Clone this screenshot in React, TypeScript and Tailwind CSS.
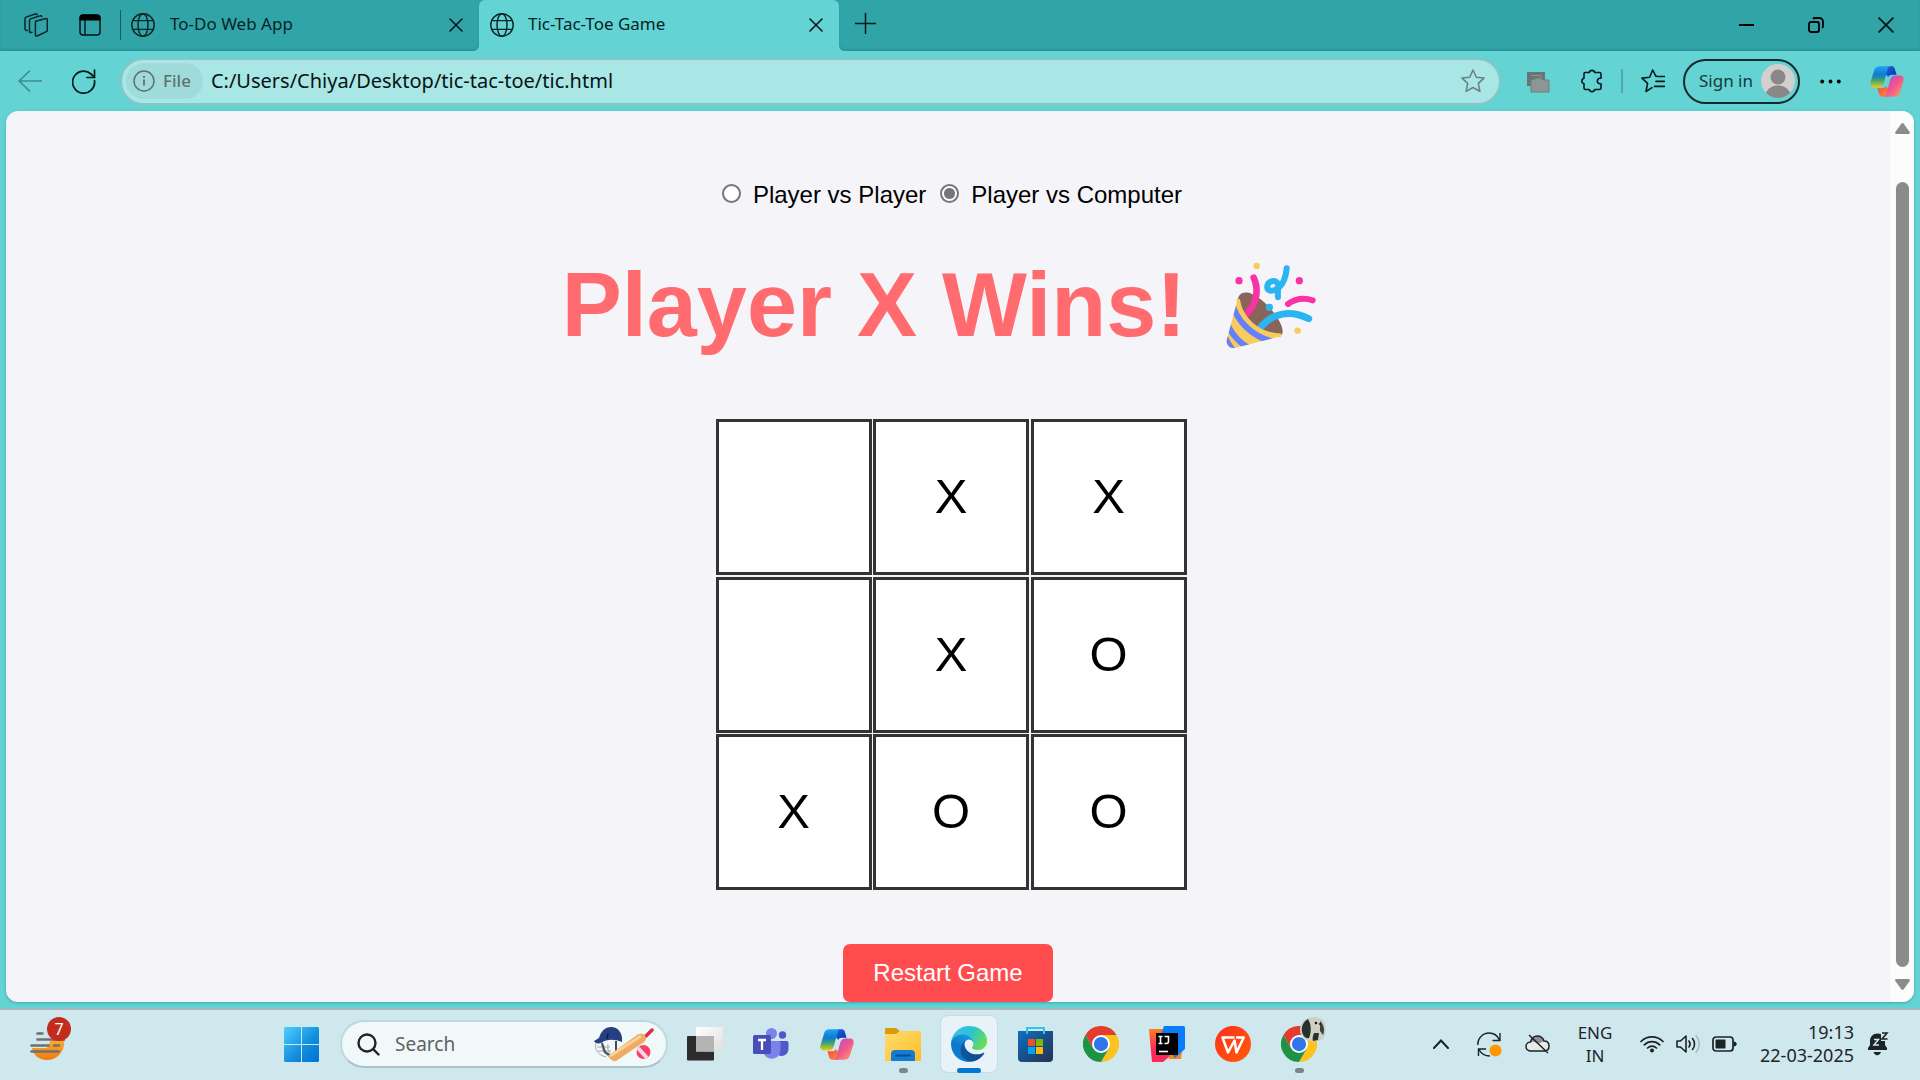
import { useId, useState, type ReactNode } from "react";

const ui = "font-['Noto_Sans',sans-serif]";

/* ---------- browser icons ---------- */

function Workspaces() {
  return (
    <svg width="24" height="24" viewBox="0 0 24 24" fill="none" stroke="#0c2526" strokeWidth="1.5" strokeLinejoin="round" strokeLinecap="round">
      <path d="M11.5 8.2 22 5.6c.8-.2 1.300.3 1.300 1v10.600c0 .7-.4 1.200-1 1.400l-9.200 4.400c-.9.300-1.700-.1-1.700-1V9.600c0-.7.4-1.200.9-1.400z" />
      <path d="M8 19.200l-1.200.300c-.8.100-1.300-.3-1.300-1V7.500c0-.8.300-1.300 1-1.600L16 2.800c.8-.3 1.500 0 1.700.8" />
      <path d="M3.300 17.600l-1-.2C1.500 17.200 1 16.800 1 16V5.700c0-.8.300-1.300 1-1.600L11.300 1c.9-.3 1.700 0 1.900.7" />
    </svg>
  );
}

function TabActions() {
  return (
    <svg width="22" height="22" viewBox="0 0 22 22">
      <rect x="1" y="1" width="20" height="20" rx="3" fill="none" stroke="#061516" strokeWidth="1.500" />
      <path d="M.5 6.500V4A3.500 3.500 0 0 1 4 .5h14A3.500 3.500 0 0 1 21.500 4v2.500z" fill="#000" />
      <path d="M6 6v15" stroke="#061516" strokeWidth="1.400" />
    </svg>
  );
}

function Globe() {
  return (
    <svg width="24" height="24" viewBox="0 0 24 24" fill="none" stroke="#0c2526" strokeWidth="1.400">
      <circle cx="12" cy="12" r="11.200" />
      <ellipse cx="12" cy="12" rx="5" ry="11.200" />
      <path d="M1.800 7.600h20.400M1.800 16.400h20.400" />
    </svg>
  );
}

function Cross({ size, weight = 1.6 }: { size: number; weight?: number }) {
  return (
    <svg width={size} height={size} viewBox="0 0 14 14" stroke="#081a1b" strokeWidth={weight} strokeLinecap="round">
      <path d="M1 1l12 12M13 1L1 13" />
    </svg>
  );
}

function Copilot() {
  const id = useId();
  return (
    <svg width="34" height="31" viewBox="0 0 101 92">
      <defs>
        <linearGradient id={id + "a"} x1="0" y1="0" x2="0" y2="1">
          <stop offset="0" stopColor="#1fa2f3" />
          <stop offset=".4" stopColor="#0f7bd0" />
          <stop offset=".65" stopColor="#3aa477" />
          <stop offset="1" stopColor="#f2cb10" />
        </linearGradient>
        <linearGradient id={id + "b"} x1="1" y1="1" x2="0" y2="0">
          <stop offset="0" stopColor="#a34df0" />
          <stop offset=".5" stopColor="#f0548c" />
          <stop offset="1" stopColor="#ffa45c" />
        </linearGradient>
        <linearGradient id={id + "c"} x1="0" y1="0" x2="1" y2="1">
          <stop offset="0" stopColor="#1b66d8" />
          <stop offset="1" stopColor="#0b2fae" />
        </linearGradient>
        <linearGradient id={id + "d"} x1="1" y1="1" x2="0" y2="0">
          <stop offset="0" stopColor="#f2433c" />
          <stop offset="1" stopColor="#ff8f3f" />
        </linearGradient>
      </defs>
      <path d="M50 1h15c7 0 9 7 11 15l3 10H66c-7 0-10 2-12 7L47 24z" fill={`url(#${id}c)`} />
      <path d="M50 1h15c7 0 9 7 11 15l3 10H66c-7 0-10 2-12 7L47 24z" fill={`url(#${id}d)`} transform="rotate(180 50.500 46)" />
      <path d="M30 1h30c-7 2-8 10-12 24l-7 26c-3 10-8 13-16 13H12C2 64-1 56 2 46l10-32C15 4 20 1 30 1z" fill={`url(#${id}a)`} />
      <path d="M30 1h30c-7 2-8 10-12 24l-7 26c-3 10-8 13-16 13H12C2 64-1 56 2 46l10-32C15 4 20 1 30 1z" fill={`url(#${id}b)`} transform="rotate(180 50.500 46)" />
    </svg>
  );
}

function TabStrip() {
  return (
    <div className={`flex h-[51px] text-[17px] text-[#062425] ${ui}`}>
      <div className="flex w-[479px] items-center rounded-br-md bg-[#31a4a8] pb-px pl-6 pr-4 shadow-[inset_0_-2px_2px_#2b969a]">
        <button aria-label="Workspaces"><Workspaces /></button>
        <button aria-label="Tab actions" className="ml-[31px]"><TabActions /></button>
        <span className="ml-[19px] h-[30px] w-px bg-[#155a5d]" />
        <button className="ml-2.5 flex flex-1 items-center gap-[15px] text-left">
          <Globe />
          <span className="pb-0.5">To-Do Web App</span>
        </button>
        <button aria-label="Close To-Do Web App"><Cross size={14} /></button>
      </div>
      <div className="flex w-[360px] bg-[#31a4a8]">
        <div className="flex flex-1 items-center rounded-t-md bg-[#63d3d3] pb-px pl-[11px] pr-4">
          <button className="flex flex-1 items-center gap-[14px] text-left">
            <Globe />
            <span className="pb-0.5">Tic-Tac-Toe Game</span>
          </button>
          <button aria-label="Close Tic-Tac-Toe Game"><Cross size={14} /></button>
        </div>
      </div>
      <div className="flex flex-1 items-center rounded-bl-md bg-[#31a4a8] pb-px pl-4 pr-[26px] shadow-[inset_0_-2px_2px_#2b969a]">
        <button aria-label="New tab" className="mb-1">
          <svg width="21" height="21" viewBox="0 0 21 21" stroke="#081a1b" strokeWidth="1.500"><path d="M10.500 0v21M0 10.500h21" /></svg>
        </button>
        <div className="ml-auto flex items-center gap-[54px]">
          <button aria-label="Minimize">
            <svg width="15" height="16" viewBox="0 0 15 16"><path d="M0 8h15" stroke="#000" strokeWidth="2" /></svg>
          </button>
          <button aria-label="Restore">
            <svg width="16" height="16" viewBox="0 0 16 16" fill="none" stroke="#000" strokeWidth="1.800">
              <rect x="1" y="5" width="10" height="10" rx="2" />
              <path d="M5 1.800C5.500 1.200 6.200 1 7 1h4.500A3.500 3.500 0 0 1 15 4.500V9c0 .8-.2 1.500-.8 2" />
            </svg>
          </button>
          <button aria-label="Close window"><Cross size={16} weight={1.7} /></button>
        </div>
      </div>
    </div>
  );
}

function Toolbar() {
  return (
    <div className={`flex h-[60px] items-center pl-[18px] pr-4 ${ui}`}>
      <button aria-label="Back">
        <svg width="24" height="22" viewBox="0 0 24 22" fill="none" stroke="#3f8c8d" strokeWidth="1.700" strokeLinecap="round" strokeLinejoin="round">
          <path d="M11.500 1L1 11l10.500 10M1 11h22.500" />
        </svg>
      </button>
      <button aria-label="Refresh" className="ml-[30px]">
        <svg width="24" height="25" viewBox="0 0 24 25" fill="none" stroke="#071c1d" strokeWidth="1.700" strokeLinecap="round" strokeLinejoin="round">
          <path d="M22.500 11.500A11 11 0 1 1 19 5l3.500 3.300" />
          <path d="M22.500 1v7.500H15" />
        </svg>
      </button>
      <div className="ml-6 flex h-[47px] flex-1 items-center rounded-full border-2 border-[#8cc4c4] bg-[#a8e7e5] pl-1 pr-[14px]">
        <button className="flex h-9 items-center gap-2 rounded-full bg-[#9fdbdb] pl-[7px] pr-3 text-[17px] font-medium text-[#64706f]">
          <svg width="22" height="22" viewBox="0 0 22 22" fill="none" stroke="#64706f" strokeWidth="1.500">
            <circle cx="11" cy="11" r="10" />
            <path d="M11 9.500v6M11 6v2" strokeWidth="1.800" />
          </svg>
          File
        </button>
        <input aria-label="Address" defaultValue="C:/Users/Chiya/Desktop/tic-tac-toe/tic.html" className="ml-2 min-w-0 flex-1 bg-transparent text-[20px] text-[#081314] outline-none" />
        <button aria-label="Add to favorites">
          <svg width="24" height="24" viewBox="0 0 24 24" fill="none" stroke="#68807f" strokeWidth="1.500" strokeLinejoin="round">
            <path d="M12 1l3.300 7.200 7.700.9-5.700 5.300 1.600 8-6.900-3.900-6.900 3.900 1.600-8L1 9.100l7.700-.9z" />
          </svg>
        </button>
      </div>
      <button aria-label="Collections" className="ml-[26px] mt-0.5">
        <svg width="23" height="21" viewBox="0 0 23 21">
          <rect width="18" height="14" fill="#6a7474" />
          <path d="M4 3.500h10V6" fill="none" stroke="#8d9696" />
          <path d="M4 7.500h4V6h6l1.500 2H22v12H4z" fill="#8d9696" stroke="#747e7e" />
        </svg>
      </button>
      <button aria-label="Extensions" className="ml-[30px]">
        <svg width="24" height="24" viewBox="0 0 24 24" fill="none" stroke="#071c1d" strokeWidth="1.600" strokeLinejoin="round">
          <path d="M5 3.500h4.200a2.900 2.900 0 0 1 5.600 0h4.700c.8 0 1.500.7 1.500 1.500v4.200h-1.500a2.900 2.900 0 0 0 0 5.600H21v4.200c0 .8-.7 1.500-1.500 1.500h-4.700a2.900 2.900 0 0 1-5.600 0H5.500A1.500 1.500 0 0 1 4 19v-4.200a2.900 2.900 0 0 1 0-5.600V5c0-.8.300-1.500 1-1.500z" />
        </svg>
      </button>
      <span className="ml-[17px] h-6 w-0.5 bg-[#53a8a8]" />
      <button aria-label="Favorites" className="ml-[18px]">
        <svg width="24" height="24" viewBox="0 0 24 24" fill="none" stroke="#071c1d" strokeWidth="1.600" strokeLinejoin="round" strokeLinecap="round">
          <path d="M17 7.500l-2.200-.4L11.700 1 8.600 8.200.9 9.100l5.700 5.300-1.600 8.100 6-3.900M15 12.400h8.500M13.500 17.400h10M18 7.500h5.500" />
        </svg>
      </button>
      <button className="ml-[18px] flex h-[45px] items-center gap-2 rounded-full border-2 border-[#17292a] pl-[14px] pr-[3px] text-[17px] text-[#17393a]">
        Sign in
        <svg width="34" height="34" viewBox="0 0 34 34">
          <circle cx="17" cy="17" r="17" fill="#d2d0ce" />
          <circle cx="17" cy="13" r="7.500" fill="#8a8886" />
          <path d="M5 29c2-5 6.500-7.500 12-7.500S27 24 29 29a17 17 0 0 1-24 0z" fill="#8a8886" />
        </svg>
      </button>
      <button aria-label="Settings and more" className="ml-5">
        <svg width="21" height="5" viewBox="0 0 21 5"><circle cx="2.200" cy="2.500" r="1.900" /><circle cx="10.500" cy="2.500" r="1.900" /><circle cx="18.800" cy="2.500" r="1.900" /></svg>
      </button>
      <button aria-label="Copilot" className="ml-[29px]"><Copilot /></button>
    </div>
  );
}

/* ---------- game page ---------- */

function PartyPopper() {
  const id = useId();
  return (
    <svg width="94" height="90" viewBox="80 60 280 270" role="img" aria-label="Party popper" fill="none" strokeLinecap="round">
      <clipPath id={id}>
        <path d="M121 175C135 235 185 282 252 284c-2 3-6 5-12 7L115 323c-18 4-31-7-28-22z" />
      </clipPath>
      <path d="M121 180c0-20 20-28 42-18 40 16 92 80 92 112 0 10-6 16-16 16C180 290 125 240 121 180z" fill="#886558" />
      <path d="M168 113c15 32 12 74-19 107" stroke="#f932a5" strokeWidth="20" />
      <path d="M187 264c38-48 92-54 146-28" stroke="#2bb4f2" strokeWidth="21" />
      <g clipPath={`url(#${id})`}>
        <rect x="80" y="160" width="180" height="170" fill="#f8cb5e" />
        <path d="M102 185c14 60 64 108 132 122" stroke="#6480ff" strokeWidth="18" strokeLinecap="butt" />
        <path d="M85 240c10 34 38 70 74 86" stroke="#6480ff" strokeWidth="18" strokeLinecap="butt" />
        <path d="M80 280c8 20 16 36 30 50" stroke="#6480ff" strokeWidth="12" strokeLinecap="butt" />
      </g>
      <path d="M121 178c9 60 60 106 130 108" stroke="#f8cb5e" strokeWidth="11" strokeLinecap="butt" />
      <path d="M267 85c-2 22-9 50-30 62-16 10-30 4-28-9 3-16 24-20 31-8 4 10-1 26 1 42" stroke="#2bb4f2" strokeWidth="18" strokeLinejoin="round" />
      <path d="M271 192c22-16 46-20 74-11" stroke="#f932a5" strokeWidth="18" />
      <circle cx="124" cy="122" r="11" fill="#f932a5" />
      <circle cx="305" cy="122" r="11" fill="#f932a5" />
      <circle cx="177" cy="78" r="9.500" fill="#f8cb5e" />
      <circle cx="300" cy="272" r="9.500" fill="#f8cb5e" />
      <circle cx="215" cy="202" r="11" fill="#2bb4f2" />
    </svg>
  );
}

const board = ["", "X", "X", "", "X", "O", "X", "O", "O"];

function Mode({ label, checked, onPick }: { label: string; checked: boolean; onPick: () => void }) {
  return (
    <label className="flex items-center gap-3">
      <input
        type="radio"
        name="mode"
        checked={checked}
        onChange={onPick}
        className="mb-1 size-[19px] appearance-none rounded-full border-2 border-[#767676] bg-white bg-clip-padding checked:bg-[radial-gradient(circle,#767676_0_5px,#fff_6px)]"
      />
      {label}
    </label>
  );
}

function Game() {
  const [mode, setMode] = useState("computer");
  return (
    <section className="flex flex-1 flex-col items-center overflow-hidden pt-[70px] font-['Liberation_Sans',Arial,sans-serif] text-2xl leading-7 text-black">
      <fieldset className="ml-2 flex gap-[14px]">
        <Mode label="Player vs Player" checked={mode === "player"} onPick={() => setMode("player")} />
        <Mode label="Player vs Computer" checked={mode === "computer"} onPick={() => setMode("computer")} />
      </fieldset>
      <h1 className="mt-11 flex items-center gap-[38px] pr-4 text-[90px] font-bold leading-[104px] text-[#ff6b6e]">
        Player X Wins!
        <PartyPopper />
      </h1>
      <div className="ml-1.5 mt-[62px] grid h-[471px] w-[471px] shrink-0 grid-cols-[repeat(3,156px)] grid-rows-[repeat(3,156px)] place-content-between">
        {board.map((mark, i) => (
          <button key={i} aria-label={`Cell ${i + 1}`} className="flex items-center justify-center border-3 border-[#333] bg-white pb-0.5 text-[49px]">
            {mark}
          </button>
        ))}
      </div>
      <button className="mt-[54px] h-[58px] shrink-0 rounded-[7px] bg-[#ff4d4f] px-[30px] text-2xl text-white">Restart Game</button>
    </section>
  );
}

function Scrollbar() {
  return (
    <div className="flex w-6 flex-col items-center bg-[#fcfcfc] py-3" aria-hidden="true">
      <svg width="15" height="11" viewBox="0 0 15 11"><path d="M6.300.8a1.500 1.500 0 0 1 2.400 0l5.800 8c.7 1 .2 2.200-1 2.200h-12c-1.200 0-1.700-1.200-1-2.200z" fill="#8b8b8b" /></svg>
      <span className="mb-3 mt-12 w-[13px] flex-1 rounded-full bg-[#8b8b8b]" />
      <svg width="15" height="11" viewBox="0 0 15 11"><path d="M6.300 10.200a1.500 1.500 0 0 0 2.400 0l5.800-8c.7-1 .2-2.200-1-2.200h-12C.3 0-.2 1.200.5 2.200z" fill="#8b8b8b" /></svg>
    </div>
  );
}

/* ---------- taskbar icons ---------- */

function Weather() {
  const id = useId();
  return (
    <svg width="35" height="34" viewBox="0 0 35 34">
      <defs>
        <linearGradient id={id} x1="0" y1="0" x2="0" y2="1"><stop offset="0" stopColor="#fbb22d" /><stop offset="1" stopColor="#f07a12" /></linearGradient>
      </defs>
      <path d="M34 11c2 12-6 22-17 22C9 33 3 28 2 21h14c3 0 3-8 7-9z" fill={`url(#${id})`} />
      <path d="M7.500 6.500h5M7.500 12.500h27M1.500 18.500h17M24 18.500h5M1.500 24.500h27" stroke="#6f6f6f" strokeWidth="2.600" strokeLinecap="round" />
    </svg>
  );
}

function Start() {
  const id = useId();
  return (
    <svg width="35" height="35" viewBox="0 0 35 35">
      <linearGradient id={id} x1="0" y1="0" x2="35" y2="35" gradientUnits="userSpaceOnUse"><stop offset="0" stopColor="#4dd0ff" /><stop offset=".55" stopColor="#1490df" /><stop offset="1" stopColor="#0070cf" /></linearGradient>
      <path d="M1 0h16v17H0V1zM18 0h16l1 1v16H18zM0 18h17v17H1l-1-1zM18 18h17v16l-1 1H18z" fill={`url(#${id})`} />
    </svg>
  );
}

function Cricket() {
  return (
    <svg width="60" height="36" viewBox="0 0 60 36">
      <g fill="none" stroke="#a4a9ac" strokeWidth="1">
        <path d="M2 17c-2 6 2 12 10 14M3 21h13M4 25h13M8 18c-1 5 2 10 8 13M14 18c-1 5 1 9 3 11" />
      </g>
      <path d="M8 17l3 9 6 4M22 15v10" fill="none" stroke="#454b54" strokeWidth="2" />
      <path d="M0 15l5-3C7 5 11 1 17 1c7 0 12 6 11 15-8-3-15-3-21 1-3 1-6 0-7-2z" fill="#263f83" />
      <path d="M14 7l-1 6" stroke="#0d1a42" strokeWidth="1.500" />
      <path d="M52 10l6-6" stroke="#d92c49" strokeWidth="3.500" strokeLinecap="round" />
      <path d="M14 30l29-21c3-2 6-1 8 0l1 4c-1 3-3 4-5 5L22 35c-2 1-6-1-8-5z" fill="#efaa63" />
      <path d="M16 30l31-20" stroke="#fbd19a" strokeWidth="3" />
      <circle cx="49.500" cy="26" r="7" fill="#f34466" />
      <path d="M44 22l9 10" stroke="#f6d6ee" strokeWidth="4" />
    </svg>
  );
}

function TaskView() {
  const id = useId();
  return (
    <svg width="36" height="34" viewBox="0 0 36 34">
      <linearGradient id={id} x1="0" y1="0" x2="1" y2="1"><stop offset="0" stopColor="#fff" /><stop offset="1" stopColor="#dedede" /></linearGradient>
      <rect y="9" width="27" height="24.500" rx="1" fill="#2c2c2c" />
      <rect x="9" width="27" height="24.500" rx="1" fill={`url(#${id})`} />
      <path d="M9 9h18v15.500H9z" fill="#b4b4b4" />
    </svg>
  );
}

function Teams() {
  return (
    <svg width="36" height="33" viewBox="0 0 36 33">
      <circle cx="29.500" cy="7" r="3.700" fill="#5059c9" />
      <path d="M25 13h9a1.500 1.500 0 0 1 1.500 1.500V21a7 7 0 0 1-10.500 6z" fill="#5059c9" />
      <circle cx="18.500" cy="5.500" r="5.500" fill="#7b83eb" />
      <path d="M10 13h16a1.500 1.500 0 0 1 1.500 1.500V23a8.800 8.800 0 0 1-17.500 0z" fill="#7b83eb" />
      <rect y="7" width="18" height="19" rx="1.500" fill="#474eb8" />
      <path d="M5 12h8M9 12v10" stroke="#fff" strokeWidth="2.300" />
    </svg>
  );
}

function Folder() {
  const id = useId();
  return (
    <svg width="36" height="33" viewBox="0 0 36 33">
      <linearGradient id={id} x1="0" y1="0" x2="1" y2="1"><stop offset="0" stopColor="#ffdd70" /><stop offset="1" stopColor="#fdbd26" /></linearGradient>
      <path d="M0 7V1.500C0 .6.600 0 1.500 0H11l4 3-3 4z" fill="#dd9a05" />
      <path d="M0 6h11l4-3h20c.6 0 1 .4 1 1v28c0 .6-.4 1-1 1H1c-.6 0-1-.4-1-1z" fill={`url(#${id})`} />
      <path d="M6 33v-7c0-2.500 1.500-4 4-4h16c2.500 0 4 1.500 4 4v7z" fill="#137bd2" />
      <path d="M11 27.500h14" stroke="#0b4f95" strokeWidth="2" strokeLinecap="round" />
    </svg>
  );
}

function Edge() {
  const id = useId();
  return (
    <svg width="36" height="36" viewBox="0 0 256 256">
      <linearGradient id={id + "a"} x1="0" y1="0" x2="1" y2="0"><stop offset="0" stopColor="#0c59a4" /><stop offset="1" stopColor="#114a8b" /></linearGradient>
      <linearGradient id={id + "b"} x1=".6" y1="0" x2=".3" y2="1"><stop offset="0" stopColor="#1b9de2" /><stop offset=".5" stopColor="#0f77c8" /><stop offset="1" stopColor="#0a7fdb" /></linearGradient>
      <linearGradient id={id + "c"} x1="0" y1=".2" x2="1" y2=".6"><stop offset="0" stopColor="#35c1f1" /><stop offset=".5" stopColor="#2bc3d2" /><stop offset="1" stopColor="#6be04f" /></linearGradient>
      <path fill={`url(#${id}a)`} d="M231.100 190.500c-3.400 1.800-6.900 3.400-10.500 4.700a101.800 101.800 0 0 1-35.900 6.500c-47.300 0-88.500-32.500-88.500-74.300a31.500 31.500 0 0 1 16.400-27.300C69.800 101.900 58.800 146.500 58.800 172.600c0 73.900 68.100 81.400 82.800 81.400 7.900 0 19.800-2.300 27-4.600l1.300-.4a128.300 128.300 0 0 0 66.600-52.800 4 4 0 0 0-5.400-5.700z" />
      <path fill={`url(#${id}b)`} d="M105.700 241.400a79.200 79.200 0 0 1-22.700-21.300 80.700 80.700 0 0 1 29.500-120c3.100-1.500 8.500-4.100 15.600-4a32.400 32.400 0 0 1 25.700 13 31.900 31.900 0 0 1 6.300 18.700c0-.2 24.500-79.600-80-79.600-43.900 0-80 41.700-80 78.200a130.200 130.200 0 0 0 12.100 56 128 128 0 0 0 156.400 67.100 75.600 75.600 0 0 1-62.800-8.100z" />
      <path fill={`url(#${id}c)`} d="M152.300 148.900c-.8 1-3.300 2.500-3.300 5.700 0 2.600 1.700 5.100 4.800 7.300 14.600 10.100 42 8.800 42.100 8.800a60.300 60.300 0 0 0 30.700-8.500 62.200 62.200 0 0 0 30.800-53.700c.3-22.700-8.100-37.800-11.400-44.400C224.600 22.400 178.300 0 128 0A128 128 0 0 0 0 126.200c.5-36.500 36.800-66 80-66 3.500 0 23.500.3 42 10.100 16.300 8.600 24.900 19 30.800 29.200 6.200 10.700 7.300 24.100 7.300 29.500s-2.700 13.300-7.800 19.900z" />
    </svg>
  );
}

function Store() {
  const id = useId();
  return (
    <svg width="35" height="35" viewBox="0 0 35 35">
      <linearGradient id={id} x1="0" y1="0" x2="1" y2="1"><stop offset="0" stopColor="#0d6fc4" /><stop offset="1" stopColor="#26304f" /></linearGradient>
      <path d="M0 4h35v27a4 4 0 0 1-4 4H4a4 4 0 0 1-4-4z" fill={`url(#${id})`} />
      <path d="M9 7V1h17v6" fill="none" stroke="#30c5f0" strokeWidth="2" />
      <path d="M10 12h7v7h-7z" fill="#f25022" /><path d="M18 12h7v7h-7z" fill="#7fba00" />
      <path d="M10 20h7v7h-7z" fill="#00a4ef" /><path d="M18 20h7v7h-7z" fill="#ffb900" />
    </svg>
  );
}

function Chrome() {
  return (
    <svg width="36" height="36" viewBox="0 0 48 48">
      <path d="M24 12h20.800A24 24 0 0 0 3.200 12l10.400 18z" fill="#e33b2e" />
      <path d="M34.400 30L24 48a24 24 0 0 0 20.800-36H24z" fill="#fcc31e" />
      <path d="M13.600 30L3.200 12A24 24 0 0 0 24 48l10.400-18z" fill="#1f9344" />
      <circle cx="24" cy="24" r="12" fill="#fff" />
      <circle cx="24" cy="24" r="9.500" fill="#2f76ea" />
    </svg>
  );
}

function IntelliJ() {
  const id = useId();
  return (
    <svg width="36" height="36" viewBox="0 0 36 36">
      <linearGradient id={id} x1="0" y1="0" x2="0" y2="1"><stop offset="0" stopColor="#fc801d" /><stop offset=".6" stopColor="#fe2857" /></linearGradient>
      <path d="M20 20l13 4-1 9H20z" fill="#fc801d" />
      <path d="M0 3h15v22l6 5-7 6H3L1 15z" fill={`url(#${id})`} />
      <path d="M15 0h19c1.500 0 2 .5 2 2v21L26 32 11 12z" fill="#087cfa" />
      <path d="M7 7h22v22H7z" />
      <path d="M9.500 10.500h4M11.500 10.500v7M9.500 17.500h4M15.500 10.500h4v5c0 1.500-1 2-2 2h-2" fill="none" stroke="#fff" strokeWidth="1.600" />
      <path d="M10 25.500h9" stroke="#fff" strokeWidth="1.600" />
    </svg>
  );
}

function Wps() {
  const id = useId();
  return (
    <svg width="36" height="36" viewBox="0 0 36 36">
      <linearGradient id={id} x1="0" y1="0" x2="1" y2="1"><stop offset="0" stopColor="#ff2e1a" /><stop offset="1" stopColor="#ff5d0c" /></linearGradient>
      <circle cx="18" cy="18" r="18" fill={`url(#${id})`} />
      <path d="M18.500 11.500H7.500L13 26.500l6.500-12 2 12 7.200-15H22" fill="none" stroke="#fff" strokeWidth="2.500" strokeLinejoin="round" strokeLinecap="round" />
    </svg>
  );
}

function DogAvatar() {
  return (
    <svg width="26" height="25" viewBox="0 0 26 25">
      <path d="M8 1c6-2 13-1 16 3 3 6 2 14-1 18-5 3-12 3-17 1-4-2-6-6-6-10C0 7 3 3 8 1z" fill="#cfcfc4" />
      <path d="M8 2c-5 3-7 8-6 13 1 4 4 7 7 6 2-4 3-13-1-19zM14 16c-1 3-2 5-1 8l5-1 1-7z" fill="#28302d" />
      <path d="M20 4c4 4 5 9 3 14l-3-4z" fill="#3b423f" />
      <circle cx="16" cy="6" r="1.300" fill="#151515" /><circle cx="20" cy="7" r="1" fill="#151515" />
    </svg>
  );
}

function TaskbarApp({ label, children, state }: { label: string; children: ReactNode; state?: "open" | "active" }) {
  return (
    <button
      aria-label={label}
      className={
        state === "active"
          ? "relative flex size-[58px] items-center justify-center rounded-lg border border-[#c6dde3] bg-[#e7f3f8]"
          : "relative flex size-[58px] items-center justify-center"
      }
    >
      {children}
      {state === "open" && <span className="absolute bottom-0 h-[5px] w-[9px] rounded-full bg-[#7b868a]" />}
      {state === "active" && <span className="absolute -bottom-px h-[5px] w-6 rounded-full bg-[#0078d4]" />}
    </button>
  );
}

function Tray() {
  return (
    <div className="ml-auto flex items-center text-[18px] leading-[23px] text-[#1c2528]">
      <button aria-label="Show hidden icons">
        <svg width="16" height="10" viewBox="0 0 16 10" fill="none" stroke="#1c2326" strokeWidth="2" strokeLinecap="round"><path d="M1 9l7-7.500L15 9" /></svg>
      </button>
      <button aria-label="Update available" className="ml-7">
        <svg width="25" height="25" viewBox="0 0 25 25" fill="none" stroke="#1c2326" strokeWidth="1.400">
          <path d="M.8 13C.5 6 6 1 12 1c4.500 0 8.500 2.500 10.500 7M23 1v7.500h-7.500M1.500 24v-7H9M2 17.500c2.300 4.500 6.500 6.500 11 6.500" />
          <circle cx="18.500" cy="18.500" r="6" fill="#ff9800" stroke="none" />
        </svg>
      </button>
      <button aria-label="OneDrive" className="ml-[23px]">
        <svg width="25" height="20" viewBox="0 0 25 20">
          <path d="M6 17c-3 0-5-2-5-4.500S3 8 5.500 8C6.500 4 9 2 12.500 2S18 4 19 7c3 0 5 2 5 5s-2 5-5 5z" fill="#e9e9e9" />
          <path d="M5 8.500C7 3.500 9.500 2 12.500 2 16 2 18 4 19 7l-6 3c-2-2-5-3-8-1.500z" fill="#8f8f8f" />
          <path d="M6 17c-3 0-5-2-5-4.500S3 8 5.500 8C6.500 4 9 2 12.500 2S18 4 19 7c3 0 5 2 5 5s-2 5-5 5zM4 1l19 18" fill="none" stroke="#1c2326" strokeWidth="1.500" />
        </svg>
      </button>
      <button className="ml-[27px] w-[36px] text-center text-[17px]">ENG<br />IN</button>
      <button aria-label="Network, volume and battery" className="ml-[27px] flex items-center gap-3">
        <svg width="24" height="18" viewBox="0 0 24 18" fill="none" stroke="#1c2326" strokeWidth="1.700" strokeLinecap="round">
          <path d="M1 6.500a15.500 15.500 0 0 1 22 0M4.300 9.800a11 11 0 0 1 15.400 0M7.600 13a6.200 6.200 0 0 1 8.800 0" />
          <circle cx="12" cy="15.500" r="2" fill="#1c2326" stroke="none" />
        </svg>
        <svg width="24" height="20" viewBox="0 0 24 20" fill="none" stroke="#1c2326" strokeWidth="1.600" strokeLinejoin="round" strokeLinecap="round">
          <path d="M1 7v6h3.500L10 18V2L4.500 7zM13 7c1.300 1.800 1.300 4.200 0 6M16.500 4.500c2.700 3.200 2.700 7.800 0 11" />
          <path d="M20 1.500c4.300 5 4.300 12 0 17" stroke="#a9bcc2" />
        </svg>
        <svg width="25" height="16" viewBox="0 0 25 16">
          <rect x="1" y="1" width="20" height="14" rx="3" fill="none" stroke="#1c2326" strokeWidth="1.700" />
          <rect x="3.500" y="3.500" width="10" height="9" rx="1" fill="#1c2326" />
          <path d="M22 6c3 0 3 4 0 4z" fill="#1c2326" stroke="#1c2326" />
        </svg>
      </button>
      <button className="ml-[23px] text-right">19:13<br />22-03-2025</button>
      <button aria-label="Notifications" className="ml-[13px]">
        <svg width="22" height="24" viewBox="0 0 22 24">
          <path d="M1 16l2-3V9c0-4 3-7.500 7.500-7.500S18 5 18 9v4l2 3v2H1z" fill="#1c2326" />
          <path d="M6.500 20h7.500c-.5 2-2 3.200-3.800 3.200S7 22 6.500 20z" fill="#1c2326" />
          <path d="M7 7.500h4.500L7 13h5" fill="none" stroke="#d0e8ee" strokeWidth="1.500" />
          <path d="M14 0h8v9h-8z" fill="#d0e8ee" />
          <path d="M15 1h5l-5 6h5.500" fill="none" stroke="#1c2326" strokeWidth="1.600" />
        </svg>
      </button>
    </div>
  );
}

function Taskbar() {
  return (
    <footer className={`flex h-[72px] items-center border-t-2 border-[#a5b9c1] bg-[#cfe8ee] pb-0.5 pl-[30px] pr-[31px] ${ui}`}>
      <button aria-label="Weather, 7 notifications" className="relative">
        <Weather />
        <span className="absolute -right-1.5 -top-2.5 flex size-6 items-center justify-center rounded-full bg-[#c42b1c] text-base text-white">7</span>
      </button>
      <button aria-label="Start" className="ml-[219px]"><Start /></button>
      <label className="ml-[21px] flex h-12 w-[328px] items-center rounded-full border-2 border-b-[#a9c4cc] border-[#bfd9e1] bg-[#f0f8fa] pl-[15px] pr-3">
        <svg width="23" height="23" viewBox="0 0 23 23" fill="none" stroke="#222" strokeWidth="2.400" strokeLinecap="round">
          <circle cx="10" cy="10" r="8.500" />
          <path d="M16.200 16.200l5.300 5.300" />
        </svg>
        <input aria-label="Search" placeholder="Search" className="ml-[15px] min-w-0 flex-1 bg-transparent text-[19px] outline-none placeholder:text-[#5d6264]" />
        <Cricket />
      </label>
      <nav className="ml-2 flex gap-2">
        <TaskbarApp label="Task view"><TaskView /></TaskbarApp>
        <TaskbarApp label="Teams"><Teams /></TaskbarApp>
        <TaskbarApp label="Copilot"><Copilot /></TaskbarApp>
        <TaskbarApp label="File Explorer" state="open"><Folder /></TaskbarApp>
        <TaskbarApp label="Edge" state="active"><Edge /></TaskbarApp>
        <TaskbarApp label="Store"><Store /></TaskbarApp>
        <TaskbarApp label="Chrome"><Chrome /></TaskbarApp>
        <TaskbarApp label="IntelliJ IDEA"><IntelliJ /></TaskbarApp>
        <TaskbarApp label="WPS Office"><Wps /></TaskbarApp>
        <TaskbarApp label="Chrome profile" state="open">
          <Chrome />
          <span className="absolute right-0.5 top-0.5"><DogAvatar /></span>
        </TaskbarApp>
      </nav>
      <Tray />
    </footer>
  );
}

export default function App() {
  return (
    <div className="flex h-screen flex-col overflow-hidden bg-[#63d3d3]">
      <header>
        <TabStrip />
        <Toolbar />
      </header>
      <main className="mx-1.5 mb-1.5 flex min-h-0 flex-1 overflow-hidden rounded-xl bg-[#f4f4f9] shadow-[0_1px_3px_#3fa9ab]">
        <Game />
        <Scrollbar />
      </main>
      <Taskbar />
    </div>
  );
}
